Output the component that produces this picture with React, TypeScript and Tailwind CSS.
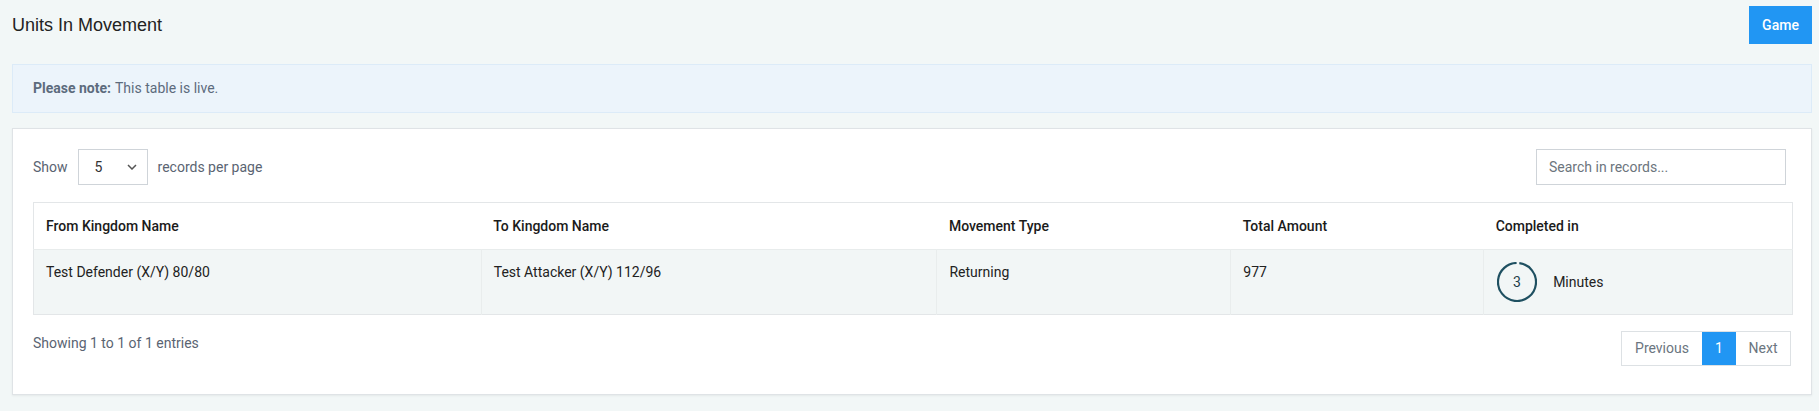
import React from "react";

const cols = [
  { label: "From Kingdom Name", w: "w-[448px]" },
  { label: "To Kingdom Name", w: "w-[456px]" },
  { label: "Movement Type", w: "w-[294px]" },
  { label: "Total Amount", w: "w-[253px]" },
  { label: "Completed in", w: "w-[309px]" },
];

function Ring() {
  const r = 19;
  const c = 2 * Math.PI * r;
  return (
    <svg width="40" height="40" viewBox="0 0 40 40" className="shrink-0">
      <circle
        cx="20"
        cy="20"
        r={r}
        fill="none"
        stroke="#1f5061"
        strokeWidth="2.2"
        strokeDasharray={`${c * 0.97} ${c}`}
        transform="rotate(-83 20 20)"
      />
      <text x="20" y="25" textAnchor="middle" fontSize="14" fill="#1f3f4a" fontFamily="Roboto, sans-serif">
        3
      </text>
    </svg>
  );
}

export default function App() {
  return (
    <div className="min-h-[411px] bg-[#f2f7f7] pl-3 pr-[7px] pt-[6px] pb-[15px] font-['Roboto',sans-serif]">
      <div className="flex items-start justify-between h-[38px]">
        <h1 className="mt-[7px] text-[18px] leading-[24px] text-[#222] font-['Liberation_Sans',Arial,sans-serif]">
          Units In Movement
        </h1>
        <button className="h-[38px] w-[63px] bg-[#2196f3] text-white text-[14px] font-medium">
          Game
        </button>
      </div>

      <div className="mt-5 h-[49px] flex items-center border border-[#dcebf8] bg-[#ecf4fb] pl-[20px] text-[14px] text-[#5c6b7d]">
        <span className="font-bold">Please note:</span>
        <span className="ml-1">This table is live.</span>
      </div>

      <div className="mt-[15px] bg-white border border-[#dfe3e6] shadow-[0_1px_2px_rgba(0,0,0,0.06)] px-5 pt-5 pb-[28px]">
        <div className="flex items-center justify-between">
          <div className="flex items-center text-[14px] text-[#5a6472]">
            <span>Show</span>
            <div className="ml-[10px] h-[36px] w-[70px] border border-[#cfd4d9] flex items-center justify-between pl-[16px] pr-[10px] text-[#333]">
              <span>5</span>
              <svg width="10" height="6" viewBox="0 0 10 6">
                <path d="M1 1l4 4 4-4" fill="none" stroke="#555" strokeWidth="1.5" />
              </svg>
            </div>
            <span className="ml-[10px]">records per page</span>
          </div>
          <div className="mr-[5px] h-[36px] w-[250px] border border-[#cfd4d9] flex items-center pl-[12px] text-[14px] text-[#6c757d]">
            Search in records...
          </div>
        </div>

        <table className="mt-[17px] w-[1760px] border-collapse border border-[#e3e6e8] text-[14px] leading-[20px]">
          <thead>
            <tr className="bg-white">
              {cols.map((c) => (
                <th
                  key={c.label}
                  className={`${c.w} text-left font-medium text-[#1b1b1b] px-[12px] py-[13px] align-top`}
                >
                  {c.label}
                </th>
              ))}
            </tr>
          </thead>
          <tbody>
            <tr className="bg-[#f2f6f6] text-[#222] border-t border-[#e8ecec]">
              <td className="px-[12px] pt-[12px] align-top border-r border-[#e9eded]">Test Defender (X/Y) 80/80</td>
              <td className="px-[12px] pt-[12px] align-top border-r border-[#e9eded]">Test Attacker (X/Y) 112/96</td>
              <td className="px-[12px] pt-[12px] align-top border-r border-[#e9eded]">Returning</td>
              <td className="px-[12px] pt-[12px] align-top border-r border-[#e9eded]">977</td>
              <td className="pl-[13px] py-[12px] align-top">
                <div className="flex items-center">
                  <Ring />
                  <span className="ml-[16px]">Minutes</span>
                </div>
              </td>
            </tr>
          </tbody>
        </table>

        <div className="mt-4 flex items-center justify-between">
          <span className="text-[14px] text-[#5a6472] -mt-[10px]">Showing 1 to 1 of 1 entries</span>
          <div className="flex h-[35px] border border-[#dde1e4] text-[14px] text-[#6b7580]">
            <span className="w-[80px] flex items-center justify-center">Previous</span>
            <span className="w-[34px] flex items-center justify-center bg-[#2196f3] text-white">1</span>
            <span className="w-[54px] flex items-center justify-center">Next</span>
          </div>
        </div>
      </div>
    </div>
  );
}
